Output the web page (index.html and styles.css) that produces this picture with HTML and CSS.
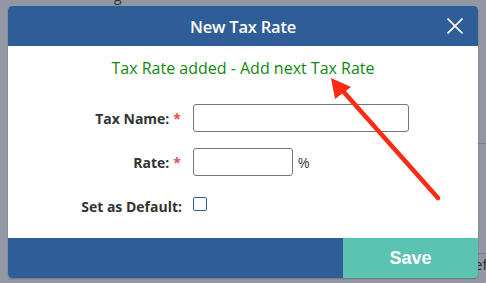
FILE: index.html
```html
<!DOCTYPE html>
<html>
<head>
<meta charset="utf-8">
<link rel="stylesheet" href="styles.css">
</head>
<body>
<div class="backdrop-text top">g</div>
<div class="backdrop-line mid"></div>
<div class="backdrop-line low"></div>
<div class="backdrop-text ef">ef</div>
<div class="modal">
  <div class="modal-header">
    <span class="title">New Tax Rate</span>
    <button class="close" aria-label="Close">
      <svg width="16" height="16" viewBox="0 0 16 16"><path d="M0.5 0.5 L15.5 15.5 M15.5 0.5 L0.5 15.5" stroke="#fff" stroke-width="1.6" fill="none"/></svg>
    </button>
  </div>
  <div class="modal-body">
    <div class="message">Tax Rate added - Add next Tax Rate</div>
    <div class="form">
      <label class="label">Tax Name:<span class="req">*</span></label>
      <div class="field"><input class="input wide" type="text"></div>
      <label class="label">Rate:<span class="req">*</span></label>
      <div class="field"><input class="input narrow" type="text"><span class="pct">%</span></div>
      <label class="label plain">Set as Default:</label>
      <div class="field"><span class="checkbox"></span></div>
    </div>
  </div>
  <div class="modal-footer">
    <div class="spacer"></div>
    <button class="save">Save</button>
  </div>
</div>
<svg class="arrow" width="486" height="283" viewBox="0 0 486 283">
  <line x1="438" y1="198" x2="342" y2="90" stroke="#ff2a12" stroke-width="4.5" stroke-linecap="round"/>
  <polygon points="331,78 351,87 335,99" fill="#ff2a12"/>
</svg>
</body>
</html>
```
FILE: styles.css
```css
* { box-sizing: border-box; }
html, body { margin: 0; padding: 0; }
body {
  width: 486px;
  height: 283px;
  background: #9298a3;
  font-family: "Open Sans", "Liberation Sans", sans-serif;
  position: relative;
  overflow: hidden;
}
.backdrop-text {
  position: absolute;
  color: #333;
  font-family: "Open Sans", sans-serif;
  line-height: 16px;
}
.backdrop-text.top { left: 114px; top: -12px; font-size: 14px; }
.backdrop-text.ef { left: 474px; top: 256px; font-size: 15px; color: #2b2b2b; }
.backdrop-line {
  position: absolute;
  left: 478px;
  width: 8px;
  height: 1px;
  background: #7b8089;
}
.backdrop-line.mid { top: 143px; }
.backdrop-line.low { top: 253px; }
.modal {
  position: absolute;
  left: 8px;
  top: 6px;
  width: 470px;
  height: 272px;
  background: #fff;
  border-radius: 4px;
  overflow: hidden;
  display: flex;
  flex-direction: column;
  box-shadow: 0 1px 2px rgba(0,0,0,0.25);
}
.modal-header {
  height: 40px;
  background: #2f5d98;
  display: flex;
  align-items: center;
  justify-content: center;
  position: relative;
}
.title {
  color: #fff;
  font-weight: 600;
  font-size: 16.5px;
  letter-spacing: -0.2px;
}
.close {
  position: absolute;
  right: 15px;
  top: 12px;
  width: 16px;
  height: 16px;
  padding: 0;
  border: 0;
  background: none;
  display: block;
}
.close svg { display: block; }
.modal-body {
  flex: 1;
  display: flex;
  flex-direction: column;
}
.message {
  margin-top: 11px;
  text-align: center;
  color: #11880f;
  font-size: 16px;
  line-height: 22px;
}
.form {
  margin-top: 25px;
  display: grid;
  grid-template-columns: 174px 1fr;
  grid-auto-rows: 28px;
  column-gap: 11px;
  row-gap: 16px;
}
.label {
  justify-self: end;
  align-self: center;
  font-weight: 700;
  font-size: 14px;
  color: #333;
  white-space: nowrap;
}
.req {
  color: #e8534f;
  margin-left: 4px;
}
.label:not(.plain) { margin-right: 1px; }
.field {
  display: flex;
  align-items: center;
}
.input {
  height: 28px;
  border: 1px solid #777;
  border-radius: 3px;
  background: #fff;
  padding: 0 6px;
  font: inherit;
}
.input.wide { width: 216px; }
.input.narrow { width: 100px; }
.pct {
  margin-left: 5px;
  font-family: "Liberation Sans", sans-serif;
  font-size: 15px;
  color: #333;
  transform: scaleX(0.85);
  transform-origin: left center;
}
.checkbox {
  width: 14px;
  height: 14px;
  border: 1px solid #2f5d98;
  border-radius: 2px;
  margin-top: -4px;
}
.modal-footer {
  height: 40px;
  display: flex;
  background: #2f5d98;
}
.spacer { flex: 1; }
.save {
  width: 135px;
  height: 40px;
  border: 0;
  background: #5cc2b2;
  color: #fff;
  font-family: "Liberation Sans", Arial, sans-serif;
  font-weight: 700;
  font-size: 18px;
  padding: 0;
}
.arrow {
  position: absolute;
  left: 0;
  top: 0;
  pointer-events: none;
}
```
